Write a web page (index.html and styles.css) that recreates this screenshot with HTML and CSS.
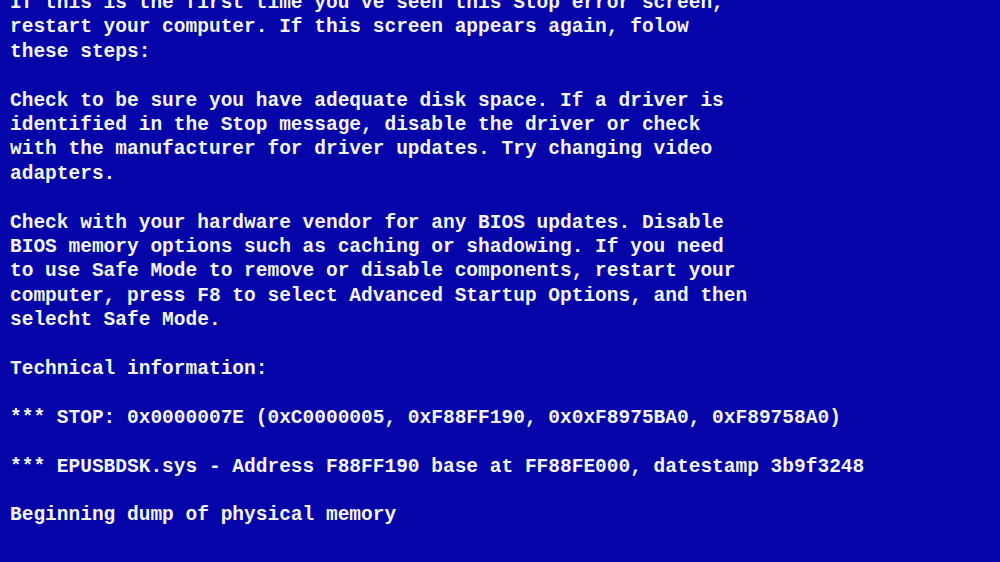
FILE: index.html
```html
<!DOCTYPE html>
<html lang="en">
<head>
    <meta charset="UTF-8">
    <meta name="viewport" content="width=device-width, initial-scale=1.0">
    <title>Stop Error</title>
    <link rel="stylesheet" href="styles.css">
</head>
<body>
    <div class="screen">
        <p>If this is the first time you've seen this Stop error screen,
restart your computer. If this screen appears again, folow
these steps:</p>

        <p>Check to be sure you have adequate disk space. If a driver is
identified in the Stop message, disable the driver or check
with the manufacturer for driver updates. Try changing video
adapters.</p>

        <p>Check with your hardware vendor for any BIOS updates. Disable
BIOS memory options such as caching or shadowing. If you need
to use Safe Mode to remove or disable components, restart your
computer, press F8 to select Advanced Startup Options, and then
selecht Safe Mode.</p>

        <p>Technical information:</p>

        <p>*** STOP: 0x0000007E (0xC0000005, 0xF88FF190, 0x0xF8975BA0, 0xF89758A0)</p>

        <p>*** EPUSBDSK.sys - Address F88FF190 base at FF88FE000, datestamp 3b9f3248</p>

        <p>Beginning dump of physical memory</p>
    </div>
</body>
</html>
```

FILE: styles.css
```css
html, body {
    margin: 0;
    height: 100%;
    overflow: hidden;
}

body {
    background-color: #0404a8;
    color: #f4f4f4;
    font-family: 'Liberation Mono', 'Courier New', monospace;
    font-weight: bold;
    font-size: 19.5px;
    line-height: 24.4px;
}

.screen {
    margin-top: -9px;
    padding-left: 10px;
    display: flex;
    flex-direction: column;
    gap: 24.4px;
}

.screen p {
    margin: 0;
    white-space: pre;
}
```
